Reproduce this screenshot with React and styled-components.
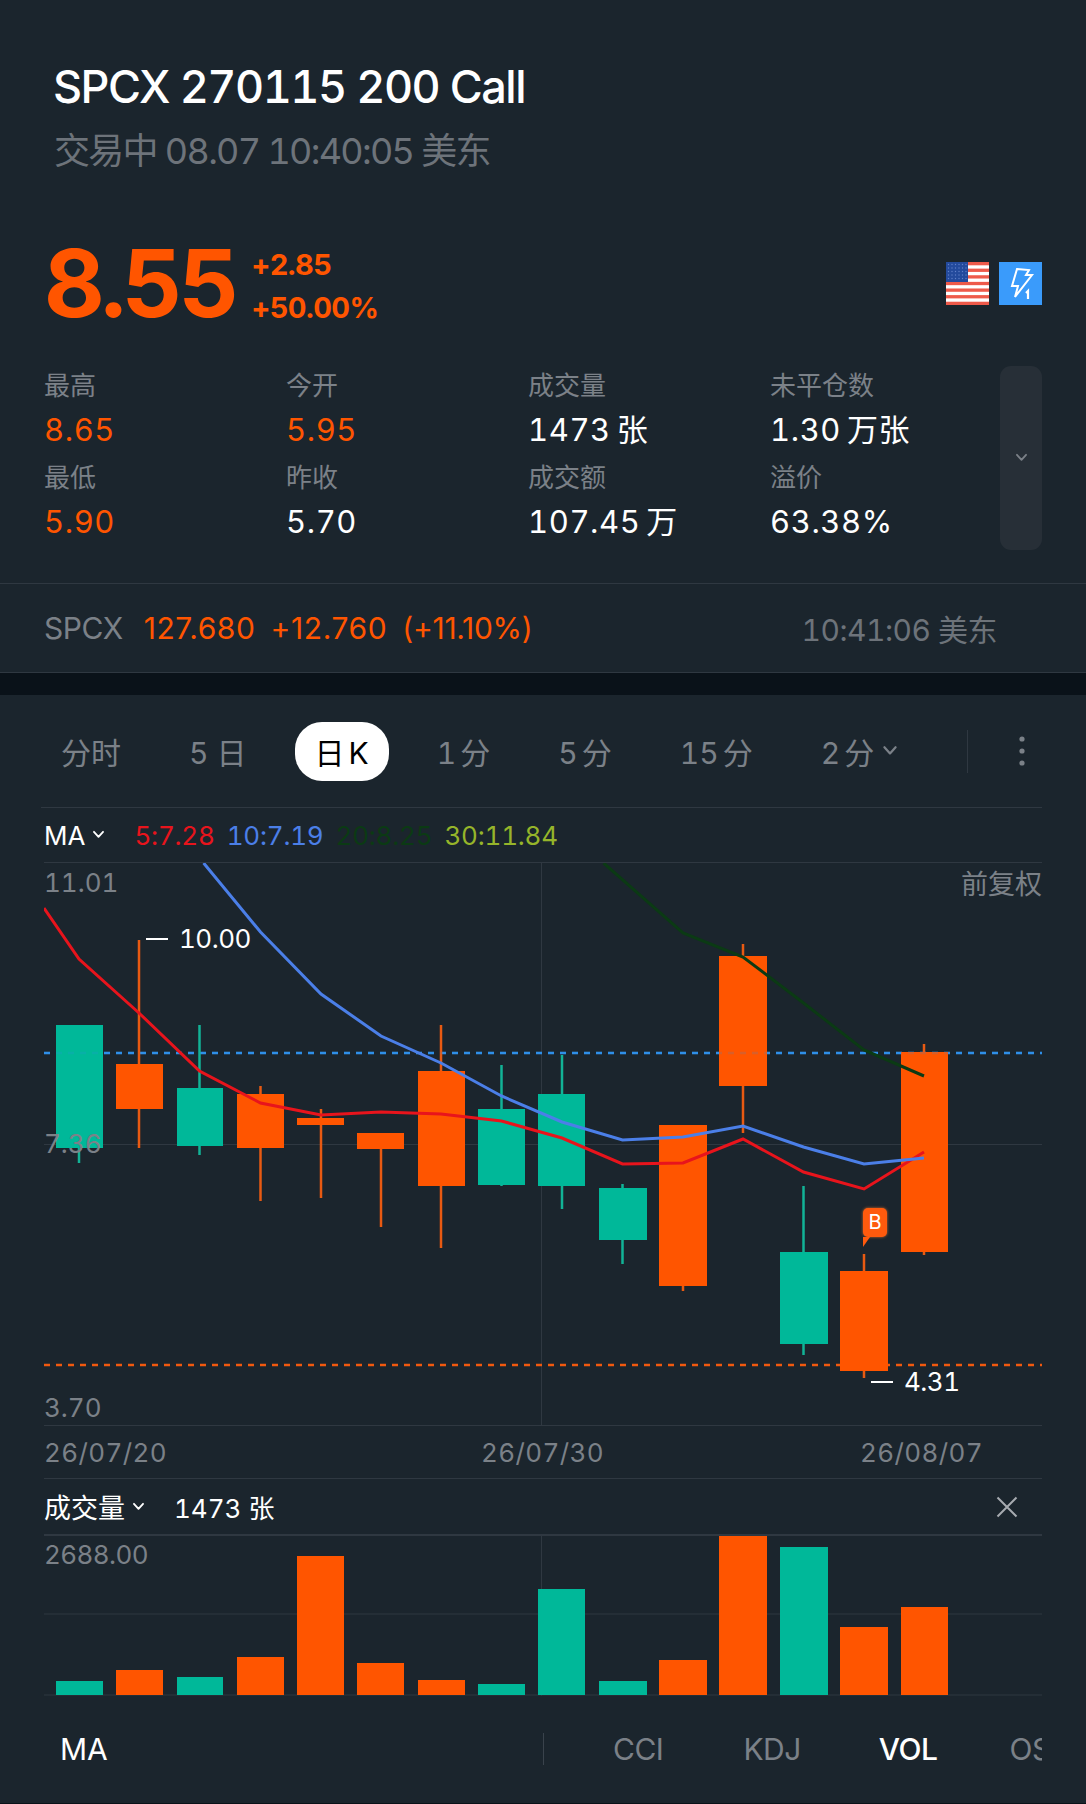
import React from "react";
import styled, { createGlobalStyle } from "styled-components";

const BG = "#1b252d";
const ORANGE = "#ff5500";
const GREEN = "#00b899";
const GRID = "#2f3841";
const MUTED = "#7b8188";

const candles = [
  { x: 79, l: 56, r: 103, top: 1025, bottom: 1148, hi: 1025, lo: 1163, up: false, vol: 1681 },
  { x: 139, l: 116, r: 163, top: 1064, bottom: 1109, hi: 940, lo: 1148, up: true, vol: 1670 },
  { x: 199.5, l: 177, r: 223, top: 1088, bottom: 1146, hi: 1025, lo: 1155, up: false, vol: 1677 },
  { x: 260.5, l: 237, r: 284, top: 1094, bottom: 1148, hi: 1086, lo: 1201, up: true, vol: 1657 },
  { x: 321, l: 297, r: 344, top: 1118, bottom: 1125, hi: 1109, lo: 1198, up: true, vol: 1556 },
  { x: 381, l: 357, r: 404, top: 1133, bottom: 1149, hi: 1133, lo: 1227, up: true, vol: 1663 },
  { x: 441, l: 418, r: 465, top: 1071, bottom: 1186, hi: 1025, lo: 1248, up: true, vol: 1680 },
  { x: 501.5, l: 478, r: 525, top: 1109, bottom: 1185, hi: 1065, lo: 1186, up: false, vol: 1684 },
  { x: 562, l: 538, r: 585, top: 1094, bottom: 1186, hi: 1055, lo: 1209, up: false, vol: 1589 },
  { x: 622.5, l: 599, r: 647, top: 1188, bottom: 1240, hi: 1184, lo: 1264, up: false, vol: 1681 },
  { x: 683, l: 659, r: 707, top: 1125, bottom: 1286, hi: 1125, lo: 1291, up: true, vol: 1660 },
  { x: 743, l: 719, r: 767, top: 956, bottom: 1086, hi: 944, lo: 1133, up: true, vol: 1536 },
  { x: 803.5, l: 780, r: 828, top: 1252, bottom: 1344, hi: 1186, lo: 1355, up: false, vol: 1547 },
  { x: 864, l: 840, r: 888, top: 1271, bottom: 1371, hi: 1254, lo: 1378, up: true, vol: 1627 },
  { x: 924, l: 901, r: 948, top: 1052, bottom: 1252, hi: 1044, lo: 1255, up: true, vol: 1607 },
];

const ma5 = "44,908 79,959 139,1013 199.5,1071 260.5,1103 321,1115 381,1112 441,1114 501.5,1121 562,1138 622.5,1164 683,1163 743,1139 803.5,1172 864,1189 924,1152";
const ma10 = "203.6,863 260.5,932 321,994 381,1036 441,1063 501.5,1096 562,1122 622.5,1140 683,1137 743,1126 803.5,1147 864,1164 924,1158";
const ma20 = "603.6,863 683,933 743,957 803.5,1003 864,1050 924,1076";

const stats = [
  { label: "最高", value: "8.65", hot: true },
  { label: "今开", value: "5.95", hot: true },
  { label: "成交量", value: "1473 张" },
  { label: "未平仓数", value: "1.30 万张" },
  { label: "最低", value: "5.90", hot: true },
  { label: "昨收", value: "5.70" },
  { label: "成交额", value: "107.45 万" },
  { label: "溢价", value: "63.38%" },
];

const GlobalStyle = createGlobalStyle`
  html, body {
    margin: 0;
    padding: 0;
    background: ${BG};
  }
  * {
    box-sizing: border-box;
  }
`;

const S = {
  Page: styled.div`
    width: 1086px;
    height: 1804px;
    overflow: hidden;
    background: ${BG};
    border-bottom: 1px solid #0a1219;
    color: #fff;
    font-family: Inter, "Noto Sans CJK SC", sans-serif;
    font-variant-numeric: tabular-nums;
  `,
  Head: styled.div`
    padding: 60px 44px 33px;
  `,
  Title: styled.div`
    margin-left: 9px;
    font-size: 45px;
    line-height: 54px;
    font-weight: 500;
    letter-spacing: -1.5px;
  `,
  Sub: styled.div`
    margin: 17px 0 0 10px;
    font-size: 36px;
    line-height: 40px;
    color: #6d737a;
    letter-spacing: -1.7px;
  `,
  PriceRow: styled.div`
    display: flex;
    align-items: center;
    height: 94px;
    margin-top: 65px;
  `,
  Price: styled.div`
    font-size: 94px;
    line-height: 94px;
    font-weight: 700;
    color: ${ORANGE};
    letter-spacing: -4px;
  `,
  Delta: styled.div`
    margin: 5px 0 0 16px;
    font-size: 29px;
    line-height: 43px;
    font-weight: 700;
    color: ${ORANGE};
    letter-spacing: -0.6px;
  `,
  Badges: styled.div`
    margin-left: auto;
    display: flex;
    gap: 10px;
  `,
  StatsRow: styled.div`
    display: flex;
    margin-top: 33px;
  `,
  StatGrid: styled.div`
    flex: 1;
    display: grid;
    grid-template-columns: repeat(3, 242px) 1fr;
    row-gap: 4px;
    align-content: start;
  `,
  StatLabel: styled.div`
    font-size: 26px;
    line-height: 45px;
    color: ${MUTED};
  `,
  StatValue: styled.div`
    font-size: 31px;
    line-height: 43px;
    letter-spacing: 0.6px;
    word-spacing: -3px;
    color: ${(p) => (p.$hot ? ORANGE : "#fff")};
  `,
  MoreButton: styled.div`
    flex: none;
    width: 42px;
    height: 184px;
    margin-top: 3px;
    border-radius: 11px;
    background: #272f37;
    display: flex;
    align-items: center;
    justify-content: center;
  `,
  QuoteRow: styled.div`
    display: flex;
    align-items: center;
    height: 90px;
    padding: 0 89px 0 44px;
    border-top: 1px solid ${GRID};
    border-bottom: 1px solid ${GRID};
    font-size: 30px;
    letter-spacing: -0.5px;
  `,
  QuoteSymbol: styled.span`
    color: ${MUTED};
    margin-right: 21px;
  `,
  QuoteValue: styled.span`
    color: ${ORANGE};
    margin-right: 15px;
    letter-spacing: ${(p) => (p.$tight ? "-0.3px" : "0.6px")};
    font-variant-numeric: proportional-nums;
  `,
  QuoteTime: styled.span`
    margin-left: auto;
    color: #6d737a;
  `,
  Band: styled.div`
    height: 22px;
    background: #0a1219;
  `,
  Panel: styled.div`
    padding: 0 44px;
  `,
  TabRow: styled.div`
    display: flex;
    align-items: center;
    gap: 28px;
    height: 113px;
    margin-left: -3px;
    border-bottom: 1px solid ${GRID};
  `,
  Tab: styled.div`
    display: flex;
    align-items: center;
    gap: 8px;
    height: 59px;
    padding: 0 20px;
    border-radius: 27px;
    font-size: 30px;
    white-space: nowrap;
    word-spacing: ${(p) => (p.$tight ? "-4px" : "0")};
    color: ${(p) => (p.$active ? "#000" : MUTED)};
    background: ${(p) => (p.$active ? "#fff" : "transparent")};
  `,
  TabMenu: styled.div`
    margin-left: auto;
    width: 75px;
    height: 43px;
    border-left: 1px solid ${GRID};
    display: flex;
    justify-content: flex-end;
    align-items: center;
    padding-right: 17px;
  `,
  MaRow: styled.div`
    display: flex;
    align-items: center;
    height: 55px;
    font-size: 26px;
    border-bottom: 1px solid ${GRID};
  `,
  MaName: styled.span`
    display: flex;
    align-items: center;
    gap: 7px;
    margin-right: 29px;
  `,
  MaValue: styled.span`
    color: ${(p) => p.$color};
    margin-right: 12px;
    letter-spacing: -0.2px;
  `,
  Chart: styled.div`
    position: relative;
    height: 562px;
    svg {
      display: block;
    }
  `,
  AxisLabel: styled.span`
    position: absolute;
    left: ${(p) => (p.$right ? "auto" : "0")};
    right: ${(p) => (p.$right ? "0" : "auto")};
    top: ${(p) => p.$center - 18}px;
    line-height: 36px;
    font-size: ${(p) => (p.$right ? 27 : 26)}px;
    color: ${MUTED};
  `,
  VolMax: styled.span`
    position: absolute;
    left: 0;
    top: 1px;
    line-height: 36px;
    font-size: 26px;
    letter-spacing: -0.6px;
    color: ${MUTED};
  `,
  Extreme: styled.span`
    position: absolute;
    left: ${(p) => p.$left}px;
    top: ${(p) => p.$center - 18}px;
    display: flex;
    align-items: center;
    gap: 11px;
    line-height: 36px;
    font-size: 26px;
    letter-spacing: -0.5px;
    color: #fff;
    &::before {
      content: "";
      width: 22px;
      height: 2px;
      background: #fff;
    }
  `,
  TradeMark: styled.span`
    position: absolute;
    left: 819px;
    top: 345px;
    width: 24px;
    height: 29px;
    border-radius: 5px;
    background: #ff5a0d;
    box-shadow: 0 0 3px rgba(255, 120, 40, 0.8);
    color: #fff;
    font-size: 20px;
    line-height: 29px;
    text-align: center;
    &::after {
      content: "";
      position: absolute;
      left: 0;
      top: 29px;
      border-top: 10px solid #ff5a0d;
      border-left: 0 solid transparent;
      border-right: 7px solid transparent;
    }
  `,
  DateRow: styled.div`
    display: grid;
    grid-template-columns: 437px 379px 1fr;
    align-items: center;
    height: 54px;
    font-size: 26px;
    letter-spacing: 0.4px;
    color: ${MUTED};
    border-top: 1px solid ${GRID};
    border-bottom: 1px solid ${GRID};
  `,
  VolHead: styled.div`
    display: flex;
    align-items: center;
    height: 57px;
    font-size: 26px;
    border-bottom: 2px solid ${GRID};
  `,
  VolName: styled.span`
    display: flex;
    align-items: center;
    gap: 7px;
    margin-right: 29px;
    font-size: 27px;
  `,
  VolClose: styled.span`
    margin-left: auto;
    margin-right: 24px;
    display: flex;
  `,
  VolChart: styled.div`
    position: relative;
    height: 160px;
    svg {
      display: block;
    }
  `,
  IndicatorRow: styled.div`
    display: flex;
    align-items: center;
    height: 107px;
    padding-bottom: 1px;
    overflow: hidden;
    font-size: 30px;
    color: ${MUTED};
  `,
  MainIndicator: styled.span`
    flex: none;
    margin-left: 16px;
    color: #fff;
    width: 483px;
  `,
  Sep: styled.span`
    flex: none;
    width: 1px;
    height: 32px;
    background: #3a434c;
    margin-right: 69px;
  `,
  Indicator: styled.span`
    flex: none;
    margin-right: ${(p) => p.$gap}px;
    color: ${(p) => (p.$active ? "#fff" : MUTED)};
    font-weight: ${(p) => (p.$active ? 500 : 400)};
    letter-spacing: -0.5px;
  `,
};

const Chevron = ({ size = 14, color = "#fff" }) => (
  <svg width={size} height={size * 0.7} viewBox="0 0 14 10" fill="none">
    <path d="M2 2 L7 7.5 L12 2" stroke={color} strokeWidth="2" strokeLinecap="round" strokeLinejoin="round" />
  </svg>
);

const starRows = [2.5, 6, 9.5, 13, 16.5];
const starCols = [2.5, 6, 9.5, 13, 16.5, 20];

const UsFlag = () => (
  <svg width="43" height="43" viewBox="0 0 43 43">
    <rect width="43" height="43" fill="#fff" />
    {[0, 1, 2, 3, 4, 5, 6].map((i) => (
      <rect key={i} y={i * 6.62} width="43" height="3.3" fill="#ee5a4a" />
    ))}
    <rect width="22" height="20" fill="#234a9c" />
    {starRows.map((y) =>
      starCols.map((x) => <circle key={`${x}-${y}`} cx={x} cy={y} r="0.7" fill="#5f7fc8" />)
    )}
  </svg>
);

const BoltBadge = () => (
  <svg width="43" height="43" viewBox="0 0 43 43">
    <rect width="43" height="43" fill="#3a9bfb" />
    <path
      d="M18 7 L30 8 L27 13 L33 13 L16 35 L19 24 L13 24 Z"
      fill="none"
      stroke="#fff"
      strokeWidth="2"
      strokeLinejoin="miter"
    />
    <path d="M27 31 L29 29 V37" fill="none" stroke="#fff" strokeWidth="2.2" />
  </svg>
);

const CandleChart = () => (
  <svg width="998" height="562" viewBox="44 863 998 562">
    <line x1="541.5" x2="541.5" y1="863" y2="1425" stroke={GRID} />
    <line x1="44" x2="1042" y1="1144.5" y2="1144.5" stroke={GRID} />
    <line x1="44" x2="1042" y1="1053" y2="1053" stroke="#2f8fe8" strokeWidth="2.5" strokeDasharray="6 6" />
    <line x1="44" x2="1042" y1="1365" y2="1365" stroke="#f0590f" strokeWidth="2.5" strokeDasharray="6 6" />
    {candles.map((c) => {
      const color = c.up ? ORANGE : GREEN;
      return (
        <g key={c.x}>
          <rect x={c.x - 1.25} y={c.hi} width="2.5" height={c.lo - c.hi} fill={c.up ? "#e85a12" : "#12b396"} />
          <rect x={c.l} y={c.top} width={c.r - c.l} height={c.bottom - c.top} fill={color} />
        </g>
      );
    })}
    <line x1="44" x2="1042" y1="1053" y2="1053" stroke="#2f8fe8" strokeWidth="2.5" strokeDasharray="6 6" opacity="0.18" />
    <polyline points={ma5} fill="none" stroke="#e8141c" strokeWidth="3" />
    <polyline points={ma10} fill="none" stroke="#4b7fe8" strokeWidth="3" />
    <polyline points={ma20} fill="none" stroke="#0b3a14" strokeWidth="3" />
  </svg>
);

const VolumeChart = () => (
  <svg width="998" height="160" viewBox="44 1536 998 160">
    <line x1="541.5" x2="541.5" y1="1536" y2="1696" stroke={GRID} />
    <line x1="44" x2="1042" y1="1614" y2="1614" stroke={GRID} />
    <line x1="44" x2="1042" y1="1695" y2="1695" stroke={GRID} />
    {candles.map((c) => (
      <rect key={c.x} x={c.l} y={c.vol} width={c.r - c.l} height={1695 - c.vol} fill={c.up ? ORANGE : GREEN} />
    ))}
  </svg>
);

const App = () => {
  return (
    <S.Page>
      <GlobalStyle />
      <S.Head>
        <S.Title>SPCX 270115 200 Call</S.Title>
        <S.Sub>交易中 08.07 10:40:05 美东</S.Sub>
        <S.PriceRow>
          <S.Price>8.55</S.Price>
          <S.Delta>
            <div>+2.85</div>
            <div>+50.00%</div>
          </S.Delta>
          <S.Badges>
            <UsFlag />
            <BoltBadge />
          </S.Badges>
        </S.PriceRow>
        <S.StatsRow>
          <S.StatGrid>
            {stats.map((s) => (
              <div key={s.label}>
                <S.StatLabel>{s.label}</S.StatLabel>
                <S.StatValue $hot={s.hot}>{s.value}</S.StatValue>
              </div>
            ))}
          </S.StatGrid>
          <S.MoreButton>
            <Chevron size={13} color={MUTED} />
          </S.MoreButton>
        </S.StatsRow>
      </S.Head>

      <S.QuoteRow>
        <S.QuoteSymbol>SPCX</S.QuoteSymbol>
        <S.QuoteValue>127.680</S.QuoteValue>
        <S.QuoteValue>+12.760</S.QuoteValue>
        <S.QuoteValue $tight>(+11.10%)</S.QuoteValue>
        <S.QuoteTime>10:41:06 美东</S.QuoteTime>
      </S.QuoteRow>
      <S.Band />

      <S.Panel>
        <S.TabRow>
          <S.Tab>分时</S.Tab>
          <S.Tab>5 日</S.Tab>
          <S.Tab $active $tight>日 K</S.Tab>
          <S.Tab $tight>1 分</S.Tab>
          <S.Tab $tight>5 分</S.Tab>
          <S.Tab $tight>15 分</S.Tab>
          <S.Tab $tight>
            2 分<Chevron size={16} color={MUTED} />
          </S.Tab>
          <S.TabMenu>
            <svg width="6" height="30" viewBox="0 0 6 30">
              <circle cx="3" cy="3" r="2.6" fill={MUTED} />
              <circle cx="3" cy="15" r="2.6" fill={MUTED} />
              <circle cx="3" cy="27" r="2.6" fill={MUTED} />
            </svg>
          </S.TabMenu>
        </S.TabRow>

        <S.MaRow>
          <S.MaName>
            MA <Chevron size={13} />
          </S.MaName>
          <S.MaValue $color="#e8141c">5:7.28</S.MaValue>
          <S.MaValue $color="#4b7fe8">10:7.19</S.MaValue>
          <S.MaValue $color="#0b3a14">20:8.25</S.MaValue>
          <S.MaValue $color="#96b52a">30:11.84</S.MaValue>
        </S.MaRow>

        <S.Chart>
          <CandleChart />
          <S.AxisLabel $center={20}>11.01</S.AxisLabel>
          <S.AxisLabel $center={281}>7.36</S.AxisLabel>
          <S.AxisLabel $center={545}>3.70</S.AxisLabel>
          <S.AxisLabel $center={22} $right>前复权</S.AxisLabel>
          <S.Extreme $left={102} $center={76}>10.00</S.Extreme>
          <S.Extreme $left={827} $center={519}>4.31</S.Extreme>
          <S.TradeMark>B</S.TradeMark>
        </S.Chart>

        <S.DateRow>
          <span>26/07/20</span>
          <span>26/07/30</span>
          <span>26/08/07</span>
        </S.DateRow>

        <S.VolHead>
          <S.VolName>
            成交量 <Chevron size={13} />
          </S.VolName>
          <span>1473 张</span>
          <S.VolClose>
            <svg width="22" height="22" viewBox="0 0 22 22">
              <path d="M1.5 1.5 L20.5 20.5 M20.5 1.5 L1.5 20.5" stroke="#a7abb0" strokeWidth="2" />
            </svg>
          </S.VolClose>
        </S.VolHead>

        <S.VolChart>
          <VolumeChart />
          <S.VolMax>2688.00</S.VolMax>
        </S.VolChart>

        <S.IndicatorRow>
          <S.MainIndicator>MA</S.MainIndicator>
          <S.Sep />
          <S.Indicator $gap={80}>CCI</S.Indicator>
          <S.Indicator $gap={78}>KDJ</S.Indicator>
          <S.Indicator $gap={72} $active>VOL</S.Indicator>
          <S.Indicator $gap={0}>OSC</S.Indicator>
        </S.IndicatorRow>
      </S.Panel>
    </S.Page>
  );
};

export default App;
